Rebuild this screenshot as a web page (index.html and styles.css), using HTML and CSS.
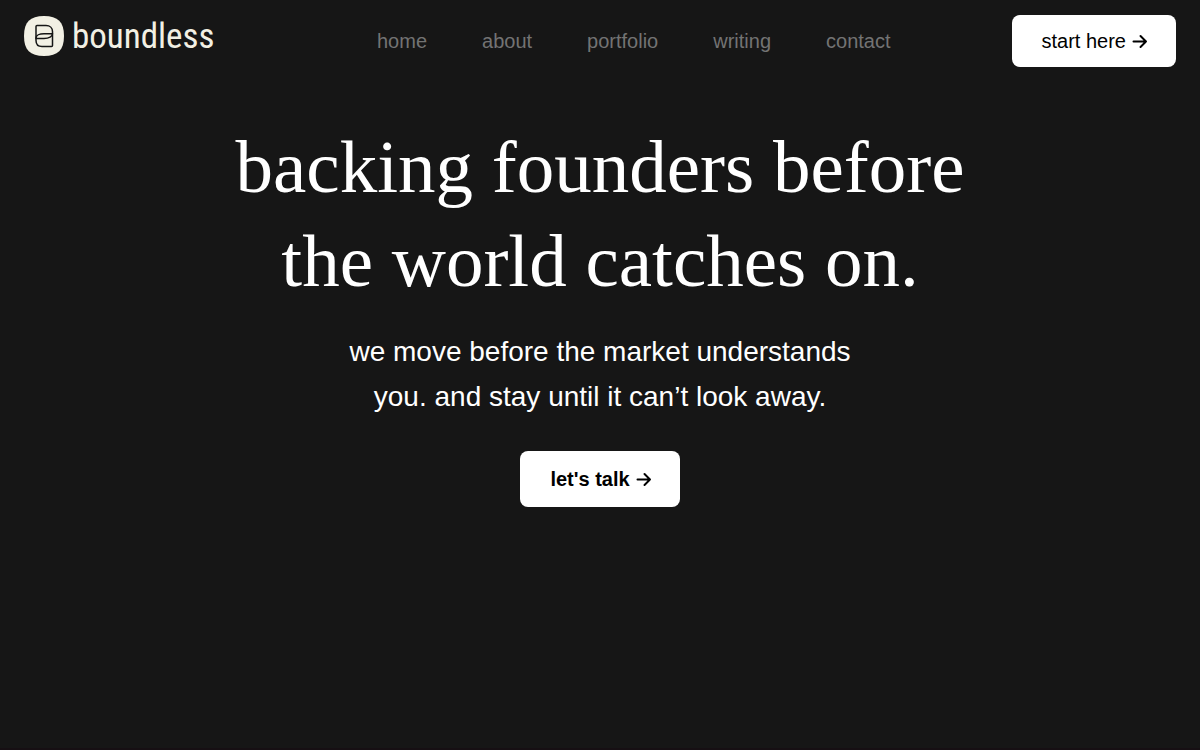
FILE: index.html
```html
<!DOCTYPE html>
<html lang="en">

<head>
    <meta charset="UTF-8">
    <meta name="viewport" content="width=device-width, initial-scale=1.0">
    <title>boundless</title>
    <link rel="stylesheet" href="styles.css">
</head>

<body>

    <header class="header">
        <a href="#" class="logo">
            <svg class="logo-mark" viewBox="0 0 40 40" aria-hidden="true">
                <path class="logo-tile" d="M20 0C34 0 40 6 40 20S34 40 20 40S0 34 0 20S6 0 20 0Z" />
                <path class="logo-line" d="M12 21V10.500Q12 9.500 13 9.500H22C26 9.500 28.500 12 28.500 15.500V29.500Q28.500 30.500 27.500 30.500H18C14 30.500 12 28.300 12 24.500V21" />
                <path class="logo-line" d="M12 22C12 19.500 15.500 17.800 20 17.800H28.500C28.500 20.500 25 22.500 20 22.500H12Z" />
            </svg>
            <span class="logo-text">boundless</span>
        </a>

        <nav class="nav">
            <a href="#">home</a>
            <a href="#about">about</a>
            <a href="#portfolio">portfolio</a>
            <a href="#writing">writing</a>
            <a href="#contact">contact</a>
        </nav>

        <button type="button" class="btn">
            start here
            <svg class="arrow" viewBox="0 0 16 16" aria-hidden="true">
                <path d="M1.500 8.500H14M8.500 3L14 8.500L8.500 14" />
            </svg>
        </button>
    </header>

    <main class="hero">
        <h1>backing founders before<br>the world catches on.</h1>
        <p>we move before the market understands<br>you. and stay until it can’t look away.</p>
        <button type="button" class="btn btn-talk">
            let's talk
            <svg class="arrow" viewBox="0 0 16 16" aria-hidden="true">
                <path d="M1.500 8.500H14M8.500 3L14 8.500L8.500 14" />
            </svg>
        </button>
    </main>

</body>

</html>
```
FILE: styles.css
```css
* {
    box-sizing: border-box;
}

body {
    margin: 0;
    min-height: 100vh;
    font-family: "Liberation Sans", Arial, sans-serif;
    background-color: #161616;
    color: #fff;
    border-bottom: 2px solid #160f13;
}

.header {
    display: flex;
    justify-content: space-between;
    align-items: center;
    padding: 15px 24px;
}

.logo {
    display: flex;
    align-items: center;
    gap: 8px;
    min-width: 232px;
    margin-bottom: 10px;
    color: #f2f0e4;
    text-decoration: none;
}

.logo-mark {
    width: 40px;
    height: 40px;
}

.logo-tile {
    fill: #f2f0e4;
}

.logo-line {
    fill: none;
    stroke: #161616;
    stroke-width: 1.5;
    stroke-linejoin: round;
}

.logo-text {
    padding-top: 2px;
    font-family: "Roboto Condensed", Roboto, sans-serif;
    font-size: 35px;
    line-height: 40px;
}

.nav {
    display: flex;
    gap: 55px;
}

.nav a {
    font-size: 20px;
    color: #737373;
    text-decoration: none;
}

.btn {
    display: inline-flex;
    align-items: center;
    gap: 6px;
    height: 52px;
    padding: 0 28px 0 30px;
    border: none;
    border-radius: 8px;
    background-color: #fff;
    color: #000;
    font-family: inherit;
    font-size: 20px;
    cursor: pointer;
}

.arrow {
    width: 16px;
    height: 16px;
    fill: none;
    stroke: #000;
    stroke-width: 2;
    stroke-linecap: round;
    stroke-linejoin: round;
}

.hero {
    display: flex;
    flex-direction: column;
    align-items: center;
    padding: 38px 24px;
    text-align: center;
}

h1 {
    margin: 0 0 21px;
    font-family: "Liberation Serif", "Times New Roman", serif;
    font-size: 75px;
    font-weight: 400;
    line-height: 94px;
}

.hero p {
    margin: 0 0 32px;
    font-size: 28px;
    line-height: 45px;
}

.btn-talk {
    height: 56px;
    font-weight: 700;
}
```
